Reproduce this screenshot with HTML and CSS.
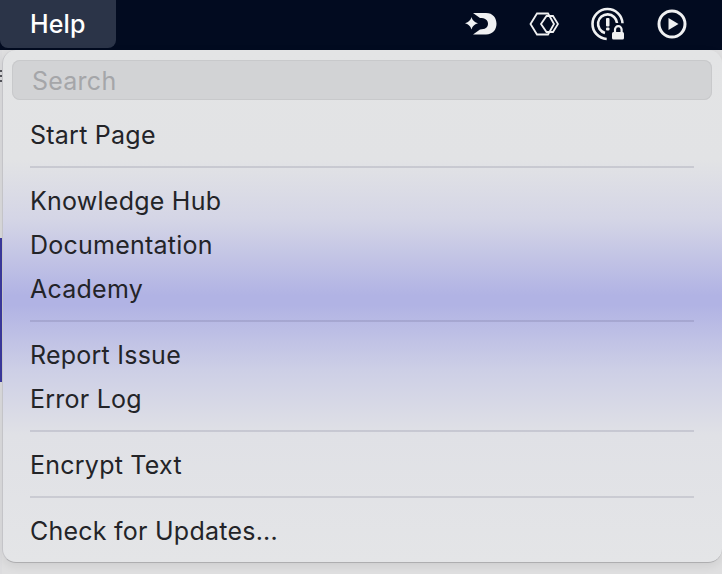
FILE: index.html
```html
<!DOCTYPE html>
<html lang="en">
<head>
<meta charset="utf-8">
<title>Help menu</title>
<link rel="stylesheet" href="styles.css">
</head>
<body>
<header class="bar">
  <div class="bar-help">Help</div>
  <div class="bar-icons">
    <svg class="ic ic-a" width="34" height="26" viewBox="0 0 34 26"><path class="fill" d="M6.500 6 C7.500 9.300 9 10.900 13 12.300 C9 13.700 7.500 15.300 6.500 18.600 C5.500 15.300 4 13.700 0 12.300 C4 10.900 5.500 9.300 6.500 6 Z"/><path class="fill" d="M8 2 H21 C28 2 31.500 7 31.500 12.800 C31.500 18.500 28 23.500 21 23.500 H8 L15 18.500 C20 18.500 23 16.500 23 12.800 C23 9 20 7 15 7 Z"/></svg>
    <svg class="ic ic-b" width="30" height="24" viewBox="0 0 30 24"><path class="line" d="M1.500 12 L8 1.500 H19 L25 12 L19 22.500 H8 Z"/><path class="line" d="M12 12 L17.500 4 H24 L29 12 L24 20 H17.500 Z"/></svg>
    <svg class="ic ic-c" width="38" height="36" viewBox="0 0 38 36"><path class="line ring" d="M16.700 33 A15 15 0 1 1 32.500 17.300"/><path class="line ring" d="M15 27 A9.500 9.500 0 1 1 27 17"/><rect class="fill" x="16" y="12" width="3.500" height="8.500" rx="1"/><rect class="fill" x="16" y="21.500" width="3.500" height="3" rx="1"/><path class="line lock" d="M25 27 V23.500 A3.300 3.300 0 0 1 31.600 23.500 V27"/><rect class="fill" x="22" y="26" width="12" height="7.500" rx="1.500"/></svg>
    <svg class="ic ic-d" width="30" height="30" viewBox="0 0 30 30"><circle class="line thick" cx="15" cy="15" r="13"/><path class="fill" d="M11.500 9 L21.500 15 L11.500 21 Z"/></svg>
  </div>
</header>
<main class="stage">
  <nav class="menu">
    <div class="search">Search</div>
    <div class="item">Start Page</div>
    <hr class="sep">
    <div class="item">Knowledge Hub</div>
    <div class="item">Documentation</div>
    <div class="item">Academy</div>
    <hr class="sep">
    <div class="item">Report Issue</div>
    <div class="item">Error Log</div>
    <hr class="sep">
    <div class="item">Encrypt Text</div>
    <hr class="sep">
    <div class="item">Check for Updates...</div>
  </nav>
</main>
</body>
</html>
```
FILE: styles.css
```css
* { box-sizing: border-box; }
html, body { margin: 0; height: 100%; }
body {
  width: 722px;
  height: 574px;
  overflow: hidden;
  background: #dcdcde;
  font-family: Inter, "Liberation Sans", sans-serif;
  display: flex;
  flex-direction: column;
}
.bar {
  height: 50px;
  flex: none;
  background: #020b20;
  display: flex;
  justify-content: space-between;
  align-items: flex-start;
}
.bar-help {
  width: 116px;
  height: 48px;
  padding: 9px 0 0 30px;
  background: #2b3448;
  border-radius: 0 0 8px 8px;
  color: #fff;
  font-size: 25px;
  line-height: 30px;
  font-weight: 500;
  letter-spacing: 0.1px;
}
.bar-icons {
  display: flex;
  align-items: center;
  height: 48px;
  padding-right: 35px;
}
.ic { display: block; flex: none; }
.ic-a { margin-right: 30px; }
.ic-b { margin-right: 31px; }
.ic-c { margin-right: 29px; }
.fill { fill: #f0f1f2; }
.line { fill: none; stroke: #f0f1f2; stroke-width: 1.800; }
.ring { stroke-width: 2.600; }
.thick { stroke-width: 3; }
.lock { stroke-width: 2.200; }
.stage {
  flex: 1;
  padding-left: 2px;
  background:
    linear-gradient(#dcdcde 20px, #55565c 20px, #55565c 22px, #dcdcde 22px, #dcdcde 25px, #55565c 25px, #55565c 27px, #dcdcde 27px, #dcdcde 30px, #55565c 30px, #55565c 32px, #dcdcde 32px, #dcdcde 188px, #3b399e 188px, #3b399e 332px, #dcdcde 332px) left top / 2px 100% no-repeat,
    #dfdfe0;
}
.menu {
  width: 720px;
  height: 513px;
  padding: 10px 10px 9px 9px;
  border-radius: 14px;
  border-bottom: 1px solid #aeaeb0;
  border-left: 1px solid #c4c4c8;
  box-shadow: 0 3px 10px rgba(0, 0, 0, 0.08);
  background: linear-gradient(#e3e4e5 0, #e2e3e5 110px, #d4d5e6 170px, #b1b3e4 245px, #b1b3e4 255px, #cdcfe6 320px, #e0e1e6 385px, #e4e5e7 513px);
  color: #232428;
  font-size: 25px;
  letter-spacing: 0.24px;
}
.search {
  height: 40px;
  padding: 6px 0 0 20px;
  border-radius: 8px;
  background: #d2d3d5;
  box-shadow: inset 0 0 0 1px #c8c9cb;
  color: #a5a6a9;
  line-height: 30px;
}
.search + .item { margin-top: 13px; }
.item {
  height: 44px;
  padding-left: 18px;
  line-height: 44px;
  white-space: nowrap;
}
.sep {
  height: 2px;
  margin: 9px 18px 11px;
  border: 0;
  background: rgba(60, 60, 90, 0.14);
}
```
